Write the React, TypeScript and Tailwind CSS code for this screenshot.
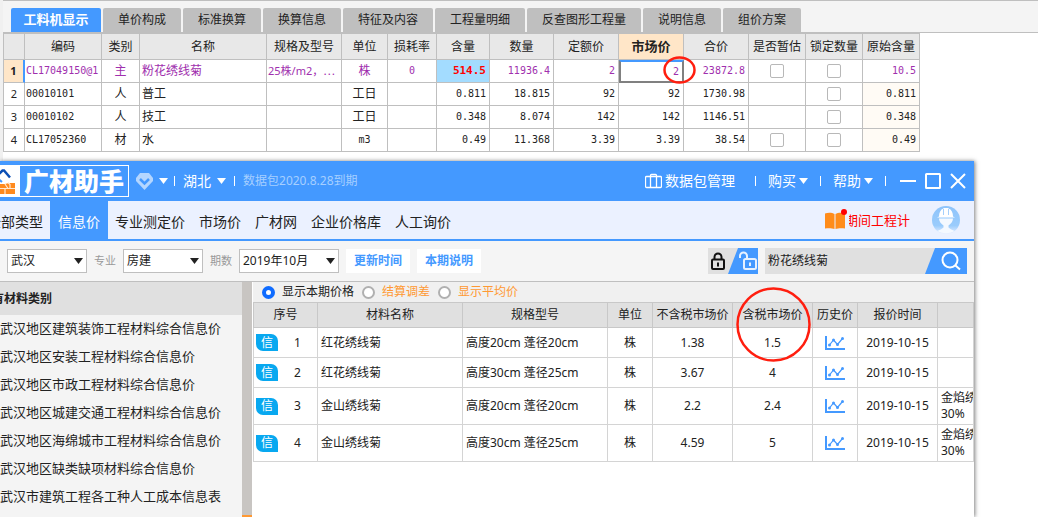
import { useState } from "react";
import clsx from "clsx";

const tabs = [
  "工料机显示",
  "单价构成",
  "标准换算",
  "换算信息",
  "特征及内容",
  "工程量明细",
  "反查图形工程量",
  "说明信息",
  "组价方案",
];

interface Resource {
  code: string;
  kind: string;
  name: string;
  spec?: string;
  unit: string;
  loss?: string;
  content: string;
  quantity: string;
  quota: string;
  market: string;
  total: string;
  estimable: boolean;
  original: string;
}

const resources: Resource[] = [
  { code: "CL17049150@1", kind: "主", name: "粉花绣线菊", spec: "25株/m2，⋯", unit: "株", loss: "0", content: "514.5", quantity: "11936.4", quota: "2", market: "2", total: "23872.8", estimable: true, original: "10.5" },
  { code: "00010101", kind: "人", name: "普工", unit: "工日", content: "0.811", quantity: "18.815", quota: "92", market: "92", total: "1730.98", estimable: false, original: "0.811" },
  { code: "00010102", kind: "人", name: "技工", unit: "工日", content: "0.348", quantity: "8.074", quota: "142", market: "142", total: "1146.51", estimable: false, original: "0.348" },
  { code: "CL17052360", kind: "材", name: "水", unit: "m3", content: "0.49", quantity: "11.368", quota: "3.39", market: "3.39", total: "38.54", estimable: true, original: "0.49" },
];

const resourceColumns = [
  { label: "", width: "w-[21px]" },
  { label: "编码", width: "w-[77px]" },
  { label: "类别", width: "w-[38px]" },
  { label: "名称", width: "w-[127px]" },
  { label: "规格及型号", width: "w-[75px]" },
  { label: "单位", width: "w-[46px]" },
  { label: "损耗率", width: "w-[49px]" },
  { label: "含量", width: "w-[53px]" },
  { label: "数量", width: "w-16" },
  { label: "定额价", width: "w-[65px]" },
  { label: "市场价", width: "w-[65px]" },
  { label: "合价", width: "w-[65px]" },
  { label: "是否暂估", width: "w-[57px]" },
  { label: "锁定数量", width: "w-[57px]" },
  { label: "原始含量", width: "w-[57px]" },
];

const navItems = ["全部类型", "信息价", "专业测定价", "市场价", "广材网", "企业价格库", "人工询价"];

const categories = [
  "武汉地区建筑装饰工程材料综合信息价",
  "武汉地区安装工程材料综合信息价",
  "武汉地区市政工程材料综合信息价",
  "武汉地区城建交通工程材料综合信息价",
  "武汉地区海绵城市工程材料综合信息价",
  "武汉地区缺类缺项材料综合信息价",
  "武汉市建筑工程各工种人工成本信息表",
];

const priceColumns = [
  { label: "序号", width: "w-[65px]" },
  { label: "材料名称", width: "w-[145px]" },
  { label: "规格型号", width: "w-[145px]" },
  { label: "单位", width: "w-[45px]" },
  { label: "不含税市场价", width: "w-20" },
  { label: "含税市场价", width: "w-20" },
  { label: "历史价", width: "w-[45px]" },
  { label: "报价时间", width: "w-20" },
  { label: "", width: "w-auto" },
];

const prices = [
  { name: "红花绣线菊", spec: "高度20cm 蓬径20cm", net: "1.38", gross: "1.5", note: "" },
  { name: "红花绣线菊", spec: "高度30cm 蓬径25cm", net: "3.67", gross: "4", note: "" },
  { name: "金山绣线菊", spec: "高度20cm 蓬径20cm", net: "2.2", gross: "2.4", note: "金焰绣线菊" },
  { name: "金山绣线菊", spec: "高度30cm 蓬径25cm", net: "4.59", gross: "5", note: "金焰绣线菊" },
];

const modes = ["显示本期价格", "结算调差", "显示平均价"];

function Caret() {
  return (
    <svg width="9" height="6" viewBox="0 0 9 6" fill="currentColor" aria-hidden="true">
      <path d="M0 0h9L4.500 6z" />
    </svg>
  );
}

function Divider() {
  return <span className="h-[10px] w-px shrink-0 bg-white" />;
}

function Logo() {
  return (
    <svg width="20" height="30" viewBox="0 0 20 30" className="shrink-0 bg-white" aria-hidden="true">
      <path d="M-2 9 2.500 4.500H4L10 11.500" fill="none" stroke="#0c4fb5" strokeWidth="2.500" />
      <path d="M-1 13.500 2 16" stroke="#4499ff" strokeWidth="2" />
      <path d="M0 18h5l4-1h6v11H0z" fill="#ff8a1e" />
      <path d="M0 22.500h15M5 22.500V28M10 22.500v-4l-2-2M5 18l3 4.500" stroke="#ffe9d2" strokeWidth="1.200" fill="none" />
    </svg>
  );
}

function LockIcon({ open }: { open?: boolean }) {
  if (open) {
    return (
      <svg width="20" height="20" viewBox="0 0 20 20" fill="none" stroke="#e6f1ff" strokeWidth="2" aria-hidden="true">
        <path d="M2 7V5a3.500 3.500 0 0 1 7 0v3" />
        <rect x="6" y="8" width="12" height="10" rx="1.500" />
        <path d="M12 11.500v3.500" />
      </svg>
    );
  }
  return (
    <svg width="14" height="18" viewBox="0 0 14 18" fill="none" stroke="#111" strokeWidth="2" aria-hidden="true">
      <path d="M3.500 7V5a3.500 3.500 0 0 1 7 0v2" />
      <rect x="1" y="7.500" width="12" height="9.500" rx="1" />
      <path d="M7 10.500v4" />
    </svg>
  );
}

function ChartIcon() {
  return (
    <svg width="20" height="14" viewBox="0 0 20 14" fill="none" stroke="#4499ff" aria-hidden="true">
      <path d="M1 0v13h19" strokeWidth="2" />
      <path d="m4.500 9 4-5 4 4.500L17.500 2.500" strokeWidth="1.200" />
      <g fill="#4499ff" stroke="none">
        <circle cx="4.500" cy="9" r="1.500" />
        <circle cx="8.500" cy="4" r="1.500" />
        <circle cx="12.500" cy="8.500" r="1.500" />
        <circle cx="17.500" cy="2.500" r="1.500" />
      </g>
    </svg>
  );
}

function Avatar() {
  return (
    <svg width="28" height="28" viewBox="0 0 28 28" aria-hidden="true">
      <defs>
        <linearGradient id="sky" x1="0" y1="0" x2="0" y2="1">
          <stop offset="0" stopColor="#8ec4fb" />
          <stop offset="0.700" stopColor="#9accfc" />
          <stop offset="1" stopColor="#ebf1ff" />
        </linearGradient>
      </defs>
      <circle cx="14" cy="14" r="14" fill="url(#sky)" />
      <path d="M7 10.500c0-4 1.500-7 4.500-8V2h5v.5c3 1 4.500 4 4.500 8l2 1H5z" fill="#fff" />
      <path d="M11.500 3v6M16.500 3v6" stroke="#8ec4fb" strokeWidth="0.800" />
      <path d="M7 12.500h14c0 3-2 5-4.500 7v2c1.500 1.500 4 2.500 6 3.500-5 3-12 3-17 0 2-1 4.500-2 6-3.500v-2c-2.500-2-4.500-4-4.500-7z" fill="#f4f9ff" />
    </svg>
  );
}

function Check({ label }: { label: string }) {
  return (
    <input
      type="checkbox"
      aria-label={label}
      className="mx-auto block size-[14px] appearance-none rounded-[2px] border border-[#b8b8b8] bg-white checked:bg-[#4499ff]"
    />
  );
}

function FilterSelect({ label, hideLabel, options, width }: { label: string; hideLabel?: boolean; options: string[]; width: string }) {
  return (
    <label className="flex items-center gap-[7px] text-[11px] text-[#999]">
      <span className={clsx(hideLabel && "sr-only")}>{label}</span>
      <span className={clsx("relative", width)}>
        <select className="block h-6 w-full appearance-none border border-[#bfbfbf] bg-white pl-[3px] text-xs text-[#222]">
          {options.map((o) => (
            <option key={o}>{o}</option>
          ))}
        </select>
        <span className="pointer-events-none absolute top-[9px] right-1 text-[#222]">
          <Caret />
        </span>
      </span>
    </label>
  );
}

function ResourceTable() {
  const cell = "border-r border-b border-[#bfbfbf] p-0";
  const num = "pr-[3px] text-right font-['DejaVu_Sans_Mono','Noto_Sans_CJK_SC',monospace] text-[10px]";
  return (
    <table className="w-[917px] table-fixed border-separate border-spacing-0 border-t border-l border-[#bfbfbf] bg-white whitespace-nowrap">
      <colgroup>
        {resourceColumns.map((c, i) => (
          <col key={i} className={c.width} />
        ))}
      </colgroup>
      <thead>
        <tr className="h-[26px] bg-[#e8e8e8]">
          {resourceColumns.map((c, i) => (
            <th
              key={i}
              className={clsx(
                "border-r border-b border-[#bfbfbf] p-0",
                c.label === "市场价" ? "bg-[#ffe6c8] text-[13px] font-bold" : "font-normal",
              )}
            >
              {c.label}
            </th>
          ))}
        </tr>
      </thead>
      <tbody>
        {resources.map((r, i) => {
          const active = i === 0;
          return (
            <tr key={r.code} className={clsx("h-[23px]", active && "text-[#a02fae]")}>
              <td
                className={clsx(
                  "border-b border-[#bfbfbf] p-0 text-center text-[11px] text-[#222]",
                  active ? "border-r-2 border-r-[#4499ff] bg-[#ffe6c8] font-bold" : "border-r",
                )}
              >
                {i + 1}
              </td>
              <td className={clsx(cell, "pl-px font-['DejaVu_Sans_Mono',monospace] text-[10px]")}>{r.code}</td>
              <td className={clsx(cell, "text-center")}>{r.kind}</td>
              <td className={clsx(cell, "pl-0.5")}>{r.name}</td>
              <td className={clsx(cell, "overflow-hidden pl-px text-[11px]")}>{r.spec}</td>
              <td className={clsx(cell, "text-center", r.unit === "m3" && "font-['DejaVu_Sans_Mono',monospace] text-[10px]")}>
                {r.unit}
              </td>
              <td className={clsx(cell, "text-center font-['DejaVu_Sans_Mono',monospace] text-[10px]")}>{r.loss}</td>
              <td className={clsx(cell, num, active && "bg-[#a3dcff] text-[11px] font-bold text-[#f00]")}>{r.content}</td>
              <td className={clsx(cell, num)}>{r.quantity}</td>
              <td className={clsx(cell, num)}>{r.quota}</td>
              {active ? (
                <td className={clsx("relative border-2 border-[#808080] border-t-[#4499ff] p-0", num)}>
                  {r.market}
                  <svg className="absolute -top-[6px] -right-[14px] z-10" width="33" height="28" viewBox="0 0 33 28" aria-hidden="true">
                    <ellipse cx="16.500" cy="14" rx="15" ry="12.500" fill="none" stroke="#ff1e0f" strokeWidth="2.500" />
                  </svg>
                </td>
              ) : (
                <td className={clsx(cell, num)}>{r.market}</td>
              )}
              <td className={clsx(cell, num)}>{r.total}</td>
              <td className={cell}>{r.estimable && <Check label={`是否暂估 ${r.name}`} />}</td>
              <td className={cell}>
                <Check label={`锁定数量 ${r.name}`} />
              </td>
              <td className={clsx(cell, num, !active && "bg-[#fffbf5]")}>{r.original}</td>
            </tr>
          );
        })}
      </tbody>
    </table>
  );
}

function TitleBar() {
  return (
    <header className="flex h-10 items-center bg-[#4499ff] text-sm text-white">
      <div className="flex h-8 items-center border border-l-0 border-white">
        <Logo />
        <h1 className="px-1 text-[25px] leading-[30px] font-black">广材助手</h1>
      </div>
      <button className="ml-[7px] flex items-center gap-[6px]" aria-label="会员">
        <svg width="17" height="17" viewBox="0 0 17 17" aria-hidden="true">
          <path d="M4 0h9l4 5v3l-8.500 9L0 8V5z" fill="#b4d6ff" />
          <path d="m4 6 4.500 4.500L13 6" fill="none" stroke="#4499ff" strokeWidth="2.500" />
        </svg>
        <Caret />
      </button>
      <div className="ml-[6px] flex items-center gap-2">
        <Divider />
        <button className="flex items-center gap-[6px]">
          湖北 <Caret />
        </button>
        <Divider />
        <span className="text-xs text-[#a6cfff]">数据包2020.8.28到期</span>
      </div>
      <div className="ml-auto flex items-center gap-3 pr-2">
        <button className="mr-2 flex items-center gap-[3px]">
          <svg width="17" height="16" viewBox="0 0 17 16" fill="none" stroke="currentColor" aria-hidden="true">
            <rect x="0.500" y="3.500" width="16" height="11" rx="1" strokeWidth="1.300" />
            <path d="M5.500 14.500v-12a1 1 0 0 1 1-1h4a1 1 0 0 1 1 1v12" strokeWidth="1.300" />
          </svg>
          数据包管理
        </button>
        <Divider />
        <button className="flex items-center gap-[3px]">
          购买 <Caret />
        </button>
        <Divider />
        <button className="flex items-center gap-[3px]">
          帮助 <Caret />
        </button>
        <Divider />
        <div className="ml-0.5 flex items-center gap-[9px]">
          <button aria-label="最小化">
            <svg width="16" height="16" viewBox="0 0 16 16" stroke="currentColor" strokeWidth="2" aria-hidden="true">
              <path d="M0 8h16" />
            </svg>
          </button>
          <button aria-label="最大化">
            <svg width="16" height="16" viewBox="0 0 16 16" fill="none" stroke="currentColor" strokeWidth="2" aria-hidden="true">
              <rect x="1" y="1" width="14" height="14" rx="0.500" />
            </svg>
          </button>
          <button aria-label="关闭">
            <svg width="16" height="16" viewBox="0 0 16 16" stroke="currentColor" strokeWidth="2" aria-hidden="true">
              <path d="m1 1 14 14M15 1 1 15" />
            </svg>
          </button>
        </div>
      </div>
    </header>
  );
}

function NavBar() {
  return (
    <nav className="flex h-10 border-b-2 border-[#4499ff] bg-[#ebf1ff] text-sm text-[#222]">
      <div className="-ml-5 flex">
        {navItems.map((item) => (
          <a
            key={item}
            href="#"
            className={clsx(
              "flex items-center pt-1 whitespace-nowrap",
              item === "信息价" ? "bg-[#4499ff] px-2 text-white" : "px-[7px]",
            )}
          >
            {item}
          </a>
        ))}
      </div>
      <div className="ml-auto flex items-center gap-[22px] pr-[14px]">
        <a href="#" className="flex items-center gap-0.5 text-[13px] text-[#f00]">
          <svg width="22" height="22" viewBox="0 0 22 22" aria-hidden="true">
            <path d="M0 4.500c3-1 7-1 9.500.500v15C7 19 3 19 0 19.500z" fill="#ff8c1a" />
            <path d="M20 4.500c-3-1-7-1-9.500.500v15c2.500-1 6.500-1 9.500-.500z" fill="#ff8c1a" />
            <circle cx="19" cy="3" r="3" fill="#f00" />
          </svg>
          <span className="flex w-[61px] justify-end overflow-hidden whitespace-nowrap">期间工程计</span>
        </a>
        <button aria-label="用户">
          <Avatar />
        </button>
      </div>
    </nav>
  );
}

function FilterBar() {
  return (
    <div className="flex h-10 items-center gap-[7px] bg-[#f5f5f5] px-[7px]">
      <div className="flex items-center gap-[7px]">
        <FilterSelect label="地区" hideLabel options={["武汉"]} width="w-20" />
        <FilterSelect label="专业" options={["房建"]} width="w-20" />
        <FilterSelect label="期数" options={["2019年10月"]} width="w-[100px]" />
      </div>
      <button className="h-6 bg-white px-2 text-xs font-bold text-[#4499ff]">更新时间</button>
      <button className="h-6 bg-white px-2 text-xs font-bold text-[#4499ff]">本期说明</button>
      <div className="ml-auto flex h-[26px] w-[50px] bg-[#e0e0e0]">
        <button aria-label="锁定" className="flex w-5 items-center justify-center">
          <LockIcon />
        </button>
        <button
          aria-label="解锁"
          className="flex flex-1 items-center justify-end bg-[#4499ff] [clip-path:polygon(10px_0,100%_0,100%_100%,0_100%)]"
        >
          <LockIcon open />
        </button>
      </div>
      <form className="flex h-[26px] w-[202px] bg-[#e0e0e0]" onSubmit={(e) => e.preventDefault()}>
        <input
          type="text"
          aria-label="搜索材料"
          defaultValue="粉花绣线菊"
          className="min-w-0 flex-1 px-[3px] text-xs text-[#222] outline-none"
        />
        <button
          aria-label="搜索"
          className="flex w-[42px] items-center justify-end bg-[#4499ff] pr-[6px] [clip-path:polygon(10px_0,100%_0,100%_100%,0_100%)]"
        >
          <svg width="20" height="20" viewBox="0 0 20 20" fill="none" stroke="#fff" strokeWidth="2" aria-hidden="true">
            <circle cx="9" cy="9" r="7.500" />
            <path d="m14.500 14.500 4.500 4" />
          </svg>
        </button>
      </form>
    </div>
  );
}

function Sidebar() {
  return (
    <aside className="w-[242px] shrink-0 overflow-hidden bg-[#f4f4f4] whitespace-nowrap text-[#222]">
      <h2 className="flex h-[33px] items-center bg-[#e0e0e0] text-xs font-bold">
        <span className="-ml-5">所有材料类别</span>
      </h2>
      <ul className="text-[13px]">
        {categories.map((c) => (
          <li key={c}>
            <a href="#" className="flex h-7 items-center">
              {c}
            </a>
          </li>
        ))}
      </ul>
    </aside>
  );
}

function PriceTable() {
  const cell = "border-r border-b border-[#d4d4d4] p-0";
  return (
    <table className="w-full table-fixed border-separate border-spacing-0 border-t border-[#c8c8c8] text-xs whitespace-nowrap text-[#222]">
      <colgroup>
        {priceColumns.map((c, i) => (
          <col key={i} className={c.width} />
        ))}
      </colgroup>
      <thead>
        <tr className="h-[25px] bg-[#e0e0e0]">
          {priceColumns.map((c, i) => (
            <th key={i} className="relative border-r border-b border-[#c8c8c8] p-0 font-normal first:border-l">
              {c.label}
              {c.label === "含税市场价" && (
                <svg className="absolute -top-4 left-[3px] z-10" width="75" height="75" viewBox="0 0 75 75" aria-hidden="true">
                  <circle cx="37.500" cy="37.500" r="36" fill="none" stroke="#ff1e0f" strokeWidth="2.500" />
                </svg>
              )}
            </th>
          ))}
        </tr>
      </thead>
      <tbody>
        {prices.map((p, i) => (
          <tr key={i} className={p.note ? "h-[37px]" : "h-[30px]"}>
            <td className={clsx(cell, "border-l")}>
              <div className="flex items-center pl-0.5">
                <span className="flex h-[17px] w-[22px] items-center justify-center rounded-tr-[7px] rounded-bl-[7px] bg-[#08a8f0] text-white">
                  信
                </span>
                <span className="flex-1 text-center">{i + 1}</span>
              </div>
            </td>
            <td className={clsx(cell, "pl-[3px]")}>{p.name}</td>
            <td className={clsx(cell, "pl-[3px]")}>{p.spec}</td>
            <td className={clsx(cell, "text-center")}>株</td>
            <td className={clsx(cell, "text-center")}>{p.net}</td>
            <td className={clsx(cell, "text-center")}>{p.gross}</td>
            <td className={cell}>
              <button aria-label="历史价" className="mx-auto block">
                <ChartIcon />
              </button>
            </td>
            <td className={clsx(cell, "text-center")}>2019-10-15</td>
            <td className={clsx(cell, "overflow-hidden pl-[3px] leading-4")}>
              {p.note && (
                <>
                  {p.note}
                  <br />
                  30%
                </>
              )}
            </td>
          </tr>
        ))}
      </tbody>
    </table>
  );
}

function PricePanel() {
  const [mode, setMode] = useState(modes[0]);
  return (
    <main className="min-w-0 flex-1 bg-white pl-px">
      <div className="flex h-5 items-center gap-2 bg-[#f0f0f0] pl-[9px] text-xs">
        {modes.map((m, i) => (
          <label key={m} className={clsx("flex items-center gap-[7px]", i === 0 ? "text-[#222]" : "text-[#ff9933]")}>
            <input
              type="radio"
              name="mode"
              checked={mode === m}
              onChange={() => setMode(m)}
              className="size-[13px] appearance-none rounded-full border-2 border-[#b0b0b0] bg-white checked:border-4 checked:border-[#0f6cff]"
            />
            {m}
          </label>
        ))}
      </div>
      <PriceTable />
    </main>
  );
}

export default function App() {
  return (
    <div className="flex min-h-screen flex-col overflow-hidden bg-white font-['Noto_Sans','Noto_Sans_CJK_SC',sans-serif]">
      <section className="border-l-[3px] border-[#f0f0f0] pb-[9px] text-xs text-[#222]">
        <div className="flex h-[33px] items-end gap-0.5 border-t border-b border-[#bfbfbf] bg-[#f4f4f4] pl-2">
          {tabs.map((t, i) => (
            <button
              key={t}
              className={clsx(
                "h-6 rounded-t-[2px] whitespace-nowrap",
                i === 0 ? "min-w-[90px] bg-[#4499ff] px-3 text-[13px] font-bold text-white" : "bg-[#bfbfbf] px-[15px]",
              )}
            >
              {t}
            </button>
          ))}
        </div>
        <ResourceTable />
      </section>

      <section className="mr-16 flex flex-1 flex-col shadow-[1px_0_4px_rgba(0,0,0,0.5)]">
        <TitleBar />
        <NavBar />
        <FilterBar />
        <div className="flex flex-1 border-t border-[#bfbfbf]">
          <Sidebar />
          <div className="flex w-[10px] shrink-0 items-end bg-[#c8c5c2]">
            <span className="h-0.5 w-full bg-[#ff9933]" />
          </div>
          <PricePanel />
        </div>
      </section>
    </div>
  );
}
